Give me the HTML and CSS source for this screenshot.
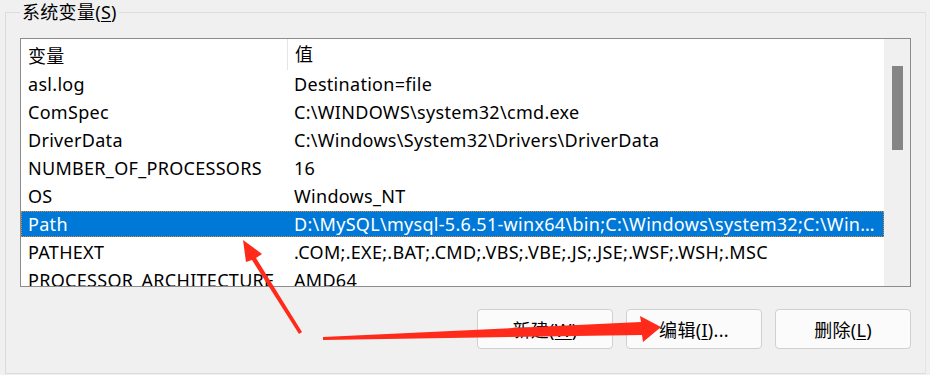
FILE: index.html
```html
<!DOCTYPE html>
<html lang="zh-CN">
<head>
    <meta charset="UTF-8">
    <title>系统变量</title>
    <link rel="stylesheet" href="styles.css">
</head>
<body>

<fieldset class="group">
    <legend>系统变量(<u>S</u>)</legend>

    <!-- variable list -->
    <div class="list">
        <div class="rows">
            <div class="row head">
                <div class="cell name">变量</div>
                <div class="cell value">值</div>
            </div>
            <div class="row"><div class="cell name">asl.log</div><div class="cell value">Destination=file</div></div>
            <div class="row"><div class="cell name">ComSpec</div><div class="cell value">C:\WINDOWS\system32\cmd.exe</div></div>
            <div class="row"><div class="cell name">DriverData</div><div class="cell value">C:\Windows\System32\Drivers\DriverData</div></div>
            <div class="row"><div class="cell name">NUMBER_OF_PROCESSORS</div><div class="cell value">16</div></div>
            <div class="row"><div class="cell name">OS</div><div class="cell value">Windows_NT</div></div>
            <div class="row selected"><div class="cell name">Path</div><div class="cell value">D:\MySQL\mysql-5.6.51-winx64\bin;C:\Windows\system32;C:\Windows;C:\Windows\System32\Wbem</div></div>
            <div class="row"><div class="cell name">PATHEXT</div><div class="cell value">.COM;.EXE;.BAT;.CMD;.VBS;.VBE;.JS;.JSE;.WSF;.WSH;.MSC</div></div>
            <div class="row"><div class="cell name">PROCESSOR_ARCHITECTURE</div><div class="cell value">AMD64</div></div>
        </div>
        <div class="scrollbar"><div class="thumb"></div></div>
    </div>

    <div class="buttons">
        <button>新建(<u>W</u>)</button>
        <button>编辑(<u>I</u>)...</button>
        <button>删除(<u>L</u>)</button>
    </div>
</fieldset>

<!-- red annotation arrows -->
<svg class="marks" width="930" height="375" viewBox="0 0 930 375">
    <polygon points="299,334 302,332 256,258 262,254 243,240 246,262 252,260" fill="#ff2a1a"/>
    <polygon points="323,340 323,337 641,322 640,316 661,327 643,342 642,335" fill="#ff2a1a"/>
</svg>

</body>
</html>
```

FILE: styles.css
```css
/* Global */
body {
    margin: 0;
    background-color: #f0f0f0;
    font-family: "Noto Sans", "Noto Sans CJK SC", sans-serif;
    font-size: 18px;
    letter-spacing: 0.3px;
    color: #000;
    width: 930px;
    height: 375px;
    overflow: hidden;
    position: relative;
}

.group {
    margin: 3px 5px 0 5px;
    padding: 0 14px 0 14px;
    border: 1px solid #dcdcdc;
    border-right-color: #e4e4e4;
    height: 371px;
    box-sizing: border-box;
    width: 921px;
    min-width: 0;
}

.group legend {
    padding: 0 2px;
    margin-left: 0;
    line-height: 18px;
}

u {
    text-decoration-thickness: 1px;
    text-underline-offset: 2px;
}

/* List box */
.list {
    margin-top: 17px;
    height: 249px;
    border: 1px solid #8c8c8c;
    box-sizing: border-box;
    background-color: #fff;
    display: flex;
    overflow: hidden;
}

.rows {
    flex: 1;
    min-width: 0;
    padding-left: 6px;
}

.row {
    display: flex;
    height: 28px;
    align-items: center;
    white-space: nowrap;
}

.row.head {
    height: 31px;
}

.cell {
    overflow: hidden;
    text-overflow: ellipsis;
    padding-left: 1px;
}

.name {
    width: 259px;
    flex: none;
    text-overflow: clip;
}

.value {
    flex: 1;
    min-width: 0;
    padding-left: 7px;
    padding-right: 4px;
}

.head .value {
    border-left: 1px solid #e5e5e5;
    height: 31px;
    line-height: 31px;
}

.row.selected {
    background-color: #0078d7;
    color: #fff;
    outline: 1px dotted #e08a2a;
    outline-offset: -1px;
    margin-left: -6px;
    padding-left: 6px;
    height: 26px;
    margin-top: 1px;
    margin-bottom: 1px;
}

.scrollbar {
    width: 26px;
    flex: none;
    background-color: #f0f0f0;
    padding-top: 27px;
    box-sizing: border-box;
}

.thumb {
    width: 11px;
    height: 84px;
    margin-left: 8px;
    background-color: #858585;
}

/* Buttons */
.buttons {
    display: flex;
    justify-content: flex-end;
    gap: 13px;
    margin-top: 22px;
}

.buttons button {
    width: 136px;
    height: 40px;
    border: 1px solid #d0d0d0;
    border-radius: 4px;
    background-color: #fbfbfb;
    font-family: inherit;
    font-size: 18px;
    letter-spacing: 0.3px;
    color: #000;
}

.marks {
    position: absolute;
    left: 0;
    top: 0;
}
```
